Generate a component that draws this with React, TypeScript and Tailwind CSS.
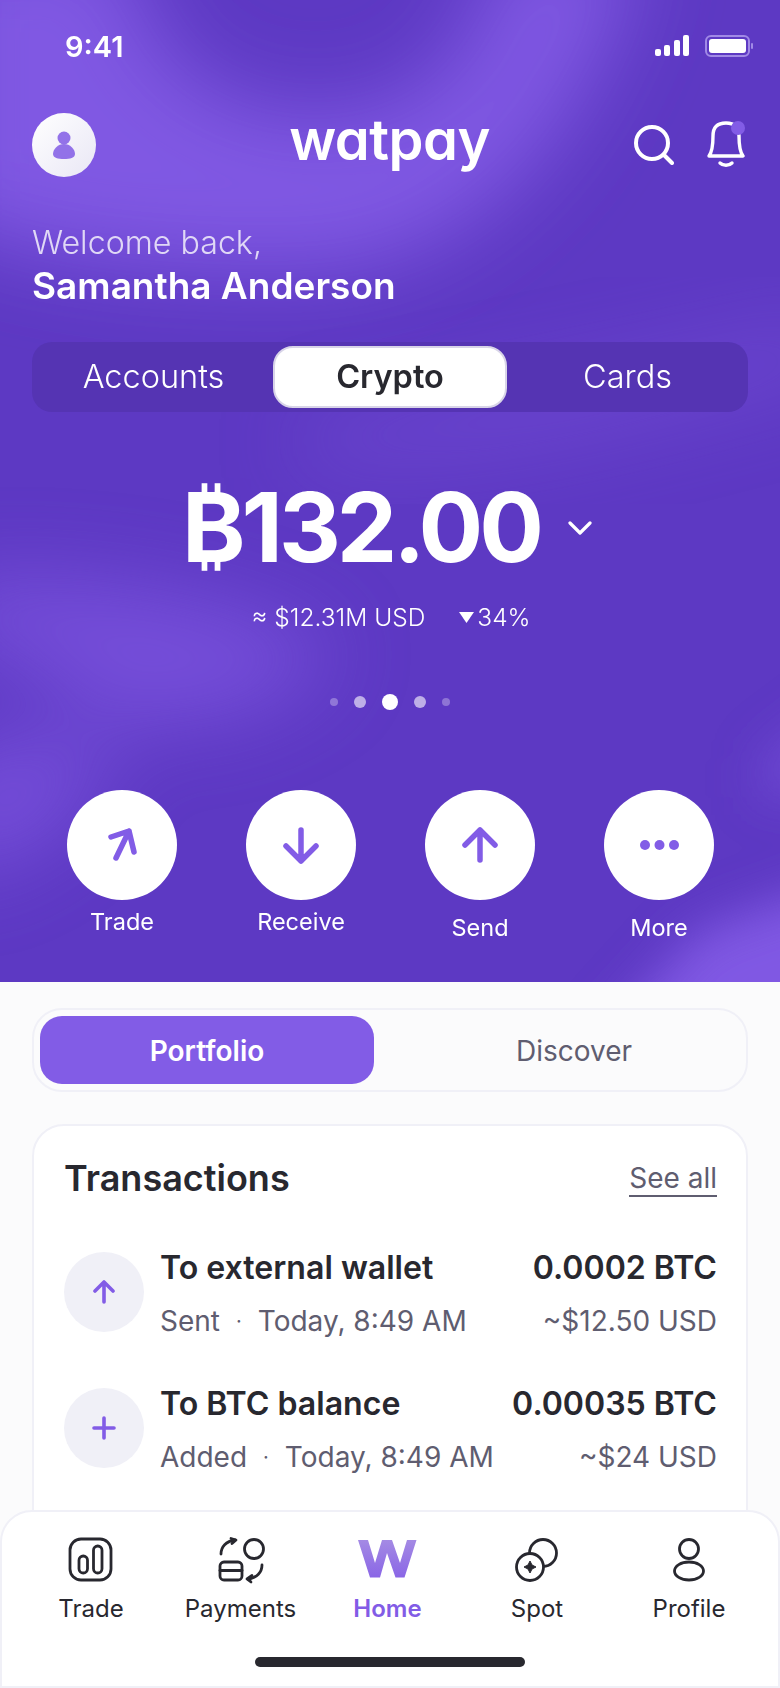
import React from 'react'

function HeroBackground() {
  // soft light bands behind the hero
  return (
    <svg className="absolute inset-0 h-full w-full" viewBox="0 0 780 982" preserveAspectRatio="none" aria-hidden="true">
      <defs>
        <filter id="b40" x="-30%" y="-30%" width="160%" height="160%"><feGaussianBlur stdDeviation="42" /></filter>
        <filter id="b20" x="-30%" y="-30%" width="160%" height="160%"><feGaussianBlur stdDeviation="24" /></filter>
      </defs>
      <rect width="780" height="982" fill="#5d39c3" />
      <g filter="url(#b40)" fill="#8058e3">
        <path d="M-60 -60 L130 -60 C130 70 240 130 360 110 C440 95 480 40 500 -60 L640 -60 C600 120 480 270 300 270 C150 270 40 260 -60 220 Z" />
      </g>
      <g filter="url(#b40)" fill="#7a52dc" opacity="0.55">
        <path d="M840 320 C650 360 480 400 300 425 L300 460 C480 470 650 420 840 370 Z" />
      </g>
      <g filter="url(#b40)" fill="#7f57e2" opacity="0.75">
        <path d="M-60 580 C100 570 250 600 340 650 C300 690 250 730 120 720 C60 680 0 650 -60 640 Z" />
        <path d="M-60 750 L120 730 C100 790 70 850 -60 880 Z" />
      </g>
      <g filter="url(#b20)" fill="#8058e3">
        <path d="M840 880 L700 930 L600 1040 L840 1040 Z" />
        <path d="M840 700 L760 760 L760 800 L840 790 Z" opacity="0.5" />
      </g>
    </svg>
  )
}

function ActionButton({ label, offset, children }: { label: string; offset?: boolean; children: React.ReactNode }) {
  return (
    <div className="flex w-[110px] flex-col items-center">
      <div className="h-[110px] w-[110px] rounded-full bg-white">{children}</div>
      <span className={`${offset ? 'mt-[12px]' : 'mt-[6px]'} whitespace-nowrap text-[23.500px] leading-[32px] text-white`}>{label}</span>
    </div>
  )
}

function TxRow({ icon, title, status, time, amount, usd }: { icon: React.ReactNode; title: string; status: string; time: string; amount: string; usd: string }) {
  return (
    <div className="flex h-[96px] items-start">
      <div className="mt-[6px] flex h-[80px] w-[80px] shrink-0 items-center justify-center rounded-full bg-[#f0f0f7]">{icon}</div>
      <div className="ml-[16px] flex-1">
        <div className="flex justify-between text-[32.100px] font-semibold leading-[44px] text-[#28282f]">
          <span>{title}</span>
          <span>{amount}</span>
        </div>
        <div className="mt-[11px] flex justify-between text-[28px] leading-[40px] text-[#5f5d70]">
          <span className="flex items-center">
            {status}
            <span className="mx-[16px] text-[20px]">·</span>
            {time}
          </span>
          <span>{usd}</span>
        </div>
      </div>
    </div>
  )
}

function NavItem({ label, active, children }: { label: string; active?: boolean; children: React.ReactNode }) {
  return (
    <div className="flex flex-col items-center">
      <div className="h-[48px] w-[64px]">{children}</div>
      <span className={`mt-[8px] whitespace-nowrap text-[24px] leading-[34px] ${active ? 'font-semibold text-[#825ce6]' : 'text-[#28282f]'}`}>{label}</span>
    </div>
  )
}

export default function App() {
  return (
    <div className="relative h-[1688px] w-[780px] overflow-hidden bg-[#fbfbfc] font-['Inter','Liberation_Sans',sans-serif]">
      {/* hero */}
      <div className="relative h-[982px] text-white">
        <HeroBackground />
        <div className="relative">
          {/* status bar */}
          <div className="flex h-[92px] items-center justify-between pl-[65px] pr-[26px]">
            <span className="text-[29px] font-semibold leading-none">9:41</span>
            <div className="flex items-center gap-[15px]">
              <svg width="36" height="22" viewBox="0 0 36 22" fill="#fff">
                <rect x="1" y="14" width="6" height="7" rx="2" />
                <rect x="10" y="10" width="6" height="11" rx="2" />
                <rect x="20" y="5" width="6" height="16" rx="2" />
                <rect x="29" y="0" width="6" height="21" rx="2" />
              </svg>
              <svg width="49" height="22" viewBox="0 0 49 22">
                <rect x="1" y="1" width="43" height="20" rx="5" fill="none" stroke="#a18ae6" strokeWidth="2" />
                <rect x="4" y="4" width="37" height="14" rx="3" fill="#fff" />
                <rect x="46" y="8" width="2" height="6" rx="1" fill="#a18ae6" />
              </svg>
            </div>
          </div>

          {/* header */}
          <div className="mt-[20px] grid h-[64px] grid-cols-[1fr_auto_1fr] items-center pl-[32px] pr-[35px]">
            <div className="flex h-[64px] w-[64px] items-center justify-center rounded-full bg-gradient-to-br from-white to-[#e9e7f5]">
              <svg width="24" height="28" viewBox="0 0 24 28" fill="#825ce6" opacity="0.85">
                <circle cx="12" cy="7" r="6.500" />
                <path d="M12 13 C18 13 23 18 23 23 C23 27 18 28 12 28 C6 28 1 27 1 23 C1 18 6 13 12 13 Z" />
              </svg>
            </div>
            <span className="ml-[2px] pb-[10px] text-[56px] font-semibold leading-none tracking-[-0.5px] [font-feature-settings:'cv11']">watpay</span>
            <div className="flex items-center justify-end gap-[33px]">
              <svg width="40" height="40" viewBox="0 0 40 40" fill="none" stroke="#fff" strokeWidth="4" strokeLinecap="round">
                <circle cx="18" cy="18" r="16" />
                <path d="M30 30 L38 38" />
              </svg>
              <div className="relative h-[48px] w-[38px]">
                <svg width="38" height="48" viewBox="0 0 38 48" fill="none" stroke="#fff" strokeWidth="3.400" strokeLinecap="round" strokeLinejoin="round">
                  <path d="M2 35 C5 31 6 26 6 15 C6 6 11 2 19 2 C27 2 32 6 32 15 C32 26 33 31 36 35 Z" />
                  <path d="M13 42 C16 45 22 45 25 42" />
                </svg>
                <span className="absolute right-[0px] top-[0px] h-[14px] w-[14px] rounded-full bg-[#825ce6]" />
              </div>
            </div>
          </div>

          {/* greeting */}
          <div className="mt-[47px] pl-[32px] text-[32.200px] font-light leading-[40px] text-[#e0d8f6]">Welcome back,</div>
          <div className="mt-[1px] pl-[32px] text-[37px] font-semibold leading-[44px]">Samantha Anderson</div>

          {/* account tabs */}
          <div className="mx-[32px] mt-[34px] grid h-[70px] grid-cols-[1fr_234px_1fr] items-center rounded-[20px] bg-[#5534b3] px-[4px] text-[32.500px] leading-none">
            <span className="pr-[2px] text-center font-light">Accounts</span>
            <span className="flex h-[62px] items-center justify-center rounded-[20px] border-2 border-[#d8d4e8] bg-white font-semibold text-[#28282f]">Crypto</span>
            <span className="pl-[4px] text-center font-light">Cards</span>
          </div>

          {/* balance */}
          <div className="mt-[50px] flex h-[130px] items-center justify-center pr-[6px]">
            <span className="text-[96px] font-bold leading-none tracking-[-4px]">₿132.00</span>
            <svg className="ml-[28px] mt-[2px]" width="24" height="15" viewBox="0 0 24 15" fill="none" stroke="#fff" strokeWidth="3.200" strokeLinecap="round" strokeLinejoin="round">
              <path d="M2 2 L12 12 L22 2" />
            </svg>
          </div>
          <div className="mt-[9px] flex h-[32px] items-center justify-center pl-[2px] text-[24.500px] font-light leading-none">
            <span>≈ $12.31M USD</span>
            <svg className="ml-[34px] mr-[3px]" width="15" height="11" viewBox="0 0 15 11" fill="#fff">
              <path d="M0 0 H15 L7.500 11 Z" />
            </svg>
            <span>34%</span>
          </div>

          {/* pager dots */}
          <div className="mt-[61px] flex h-[16px] items-center justify-center gap-4">
            <span className="h-[8px] w-[8px] rounded-full bg-white/30" />
            <span className="h-[12px] w-[12px] rounded-full bg-white/60" />
            <span className="h-[16px] w-[16px] rounded-full bg-white" />
            <span className="h-[12px] w-[12px] rounded-full bg-white/60" />
            <span className="h-[8px] w-[8px] rounded-full bg-white/30" />
          </div>

          {/* quick actions */}
          <div className="mt-[80px] flex gap-[69px] pl-[67px]">
            <ActionButton label="Trade">
              <svg width="110" height="110" viewBox="0 0 110 110" fill="none" stroke="#825ce6" strokeWidth="5.500" strokeLinecap="round" strokeLinejoin="round">
                <path d="M44 47 L62 41 L67 62 M62 41 L49 68" />
              </svg>
            </ActionButton>
            <ActionButton label="Receive">
              <svg width="110" height="110" viewBox="0 0 110 110" fill="none" stroke="#825ce6" strokeWidth="5.500" strokeLinecap="round" strokeLinejoin="round">
                <path d="M55 40 V71 M40 56 L55 71 L70 56" />
              </svg>
            </ActionButton>
            <ActionButton label="Send" offset>
              <svg width="110" height="110" viewBox="0 0 110 110" fill="none" stroke="#825ce6" strokeWidth="5.500" strokeLinecap="round" strokeLinejoin="round">
                <path d="M55 70 V40 M40 55 L55 40 L70 55" />
              </svg>
            </ActionButton>
            <ActionButton label="More" offset>
              <svg width="110" height="110" viewBox="0 0 110 110" fill="#825ce6">
                <circle cx="41" cy="55" r="5" />
                <circle cx="55.500" cy="55" r="5" />
                <circle cx="70" cy="55" r="5" />
              </svg>
            </ActionButton>
          </div>
        </div>
      </div>

      {/* portfolio switch */}
      <div className="mx-[32px] mt-[26px] flex h-[84px] items-center rounded-[30px] border-2 border-[#f0f0f7] px-[6px]">
        <div className="flex h-[68px] w-[334px] items-center justify-center rounded-[22px] bg-[#825ce6] pt-[2px] text-[28px] font-semibold leading-none text-white">Portfolio</div>
        <div className="flex flex-1 items-center justify-center pl-[34px] pt-[2px] text-[28px] leading-none text-[#5f5d70]">Discover</div>
      </div>

      {/* transactions */}
      <div className="mx-[32px] mt-[32px] h-[560px] rounded-[32px] border-2 border-[#f0f0f7] bg-white pl-[30px] pr-[29px] pt-[30px]">
        <div className="flex items-center justify-between">
          <span className="text-[36px] font-semibold leading-[44px] text-[#28282f]">Transactions</span>
          <span className="mt-[1px] border-b-2 border-[#5f5d70] text-[28px] leading-[34px] text-[#5f5d70]">See all</span>
        </div>
        <div className="mt-[46px] flex flex-col gap-[40px]">
          <TxRow
            icon={
              <svg width="24" height="24" viewBox="0 0 24 24" fill="none" stroke="#825ce6" strokeWidth="3.600" strokeLinecap="round" strokeLinejoin="round">
                <path d="M12 2 V22 M3 11 L12 2 L21 11" />
              </svg>
            }
            title="To external wallet"
            status="Sent"
            time="Today, 8:49 AM"
            amount="0.0002 BTC"
            usd="~$12.50 USD"
          />
          <TxRow
            icon={
              <svg width="24" height="24" viewBox="0 0 24 24" fill="none" stroke="#825ce6" strokeWidth="3.600" strokeLinecap="round">
                <path d="M12 2 V22 M2 12 H22" />
              </svg>
            }
            title="To BTC balance"
            status="Added"
            time="Today, 8:49 AM"
            amount="0.00035 BTC"
            usd="~$24 USD"
          />
        </div>
      </div>

      {/* bottom nav */}
      <div className="absolute bottom-0 left-0 right-0 h-[178px] rounded-t-[32px] border-2 border-[#f0f0f7] bg-white pt-[24px]">
        <div className="grid grid-cols-[150px_149px_145px_154px_150px] pl-[14px]">
          <NavItem label="Trade">
            <svg width="64" height="48" viewBox="0 0 64 48" fill="none" stroke="#28282f" strokeWidth="2.800" strokeLinecap="round">
              <rect x="11" y="3" width="41" height="41" rx="11" />
              <rect x="20" y="20" width="8.500" height="17" rx="4.250" />
              <rect x="34.500" y="10" width="8.500" height="27" rx="4.250" />
            </svg>
          </NavItem>
          <NavItem label="Payments">
            <svg width="64" height="48" viewBox="0 0 64 48" fill="none" stroke="#28282f" strokeWidth="2.800" strokeLinecap="round" strokeLinejoin="round">
              <circle cx="45" cy="13" r="9.500" />
              <rect x="11" y="26" width="22" height="18" rx="4" />
              <path d="M11 34.500 H33" />
              <path d="M12 18 C12 11 17 5 26 4" />
              <path d="M22 2.500 L27 4 L23 7.500" fill="#28282f" />
              <path d="M53 29 C53 36 48 42 39 43" />
              <path d="M43 39.500 L38 43 L42 46" fill="#28282f" />
            </svg>
          </NavItem>
          <NavItem label="Home" active>
            <svg width="64" height="48" viewBox="0 0 64 48">
              <defs>
                <linearGradient id="homeW" x1="0" y1="0" x2="0" y2="1">
                  <stop offset="0" stopColor="#a48ae4" />
                  <stop offset="1" stopColor="#8a66e6" />
                </linearGradient>
              </defs>
              <path fill="url(#homeW)" d="M2 4 H12 L19 27 L26 4 H36 L44 27 L51 4 H60.500 L48.500 41.500 H39.500 L31 17 L24 41.500 H14 Z" />
            </svg>
          </NavItem>
          <NavItem label="Spot">
            <svg width="64" height="48" viewBox="0 0 64 48" fill="none" stroke="#28282f" strokeWidth="2.800">
              <circle cx="38" cy="17" r="13.500" />
              <circle cx="25" cy="31" r="13.500" fill="#fff" />
              <path d="M25 25 L27 29 L31 31 L27 33 L25 37 L23 33 L19 31 L23 29 Z" fill="#28282f" strokeWidth="1" strokeLinejoin="round" />
            </svg>
          </NavItem>
          <NavItem label="Profile">
            <svg width="64" height="48" viewBox="0 0 64 48" fill="none" stroke="#28282f" strokeWidth="2.800">
              <circle cx="32" cy="13" r="9.500" />
              <ellipse cx="32" cy="35" rx="14.500" ry="9" />
            </svg>
          </NavItem>
        </div>
        <div className="mx-auto mt-[31px] h-[10px] w-[270px] rounded-full bg-[#28282f]" />
      </div>
    </div>
  )
}
